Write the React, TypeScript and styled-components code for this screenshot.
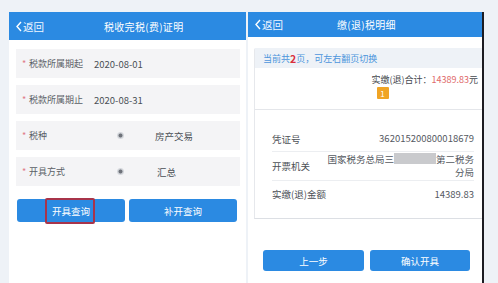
import styled, { createGlobalStyle } from 'styled-components';

const GlobalStyle = createGlobalStyle`
  html, body {
    margin: 0;
    padding: 0;
    background: #eef2f7;
    font-family: 'Noto Sans CJK SC', 'Noto Sans', sans-serif;
  }
`;

const Page = styled.div`
  display: flex;
  width: 498px;
  height: 283px;
  padding-top: 12px;
  box-sizing: border-box;
  overflow: hidden;
`;

const Screen = styled.div<{ $width: number; $ml: number; $edge?: boolean }>`
  display: flex;
  flex-direction: column;
  width: ${(p) => p.$width}px;
  margin-left: ${(p) => p.$ml}px;
  background: #ffffff;
  border-right: ${(p) => (p.$edge ? '2px solid #1c1c22' : 'none')};
  box-sizing: border-box;
`;

const Header = styled.div<{ $h: number }>`
  display: flex;
  align-items: center;
  height: ${(p) => p.$h}px;
  background: #2b8ae2;
  color: #ffffff;
  padding-left: 7px;
`;

const Back = styled.span`
  display: flex;
  align-items: center;
  gap: 1px;
  font-size: 10.5px;
  color: #eef6ff;
`;

const Chevron = () => (
  <svg width="6" height="11" viewBox="0 0 6 11">
    <path d="M5 1 L1 5.5 L5 10" stroke="#ffffff" strokeWidth="1.4" fill="none" />
  </svg>
);

const Title = styled.span<{ $left?: number }>`
  font-size: 10px;
  margin-left: ${(p) => (p.$left !== undefined ? `${p.$left}px` : 'auto')};
  margin-right: auto;
  letter-spacing: 0.3px;
`;

/* left form */

const FormBody = styled.div`
  display: flex;
  flex-direction: column;
  padding: 9px 6px 0 7px;
  gap: 7px;
`;

const FormRow = styled.div`
  display: flex;
  align-items: center;
  height: 29px;
  background: #f4f4f6;
  font-size: 9px;
  color: #5a5f66;
  padding-left: 6px;
`;

const Star = styled.span`
  color: #e07a86;
  width: 7px;
`;

const Label = styled.span`
  width: 65px;
`;

const Value = styled.span<{ $ml?: number }>`
  color: #4a4f55;
  font-size: 9.5px;
  margin-left: ${(p) => p.$ml ?? 0}px;
`;

const Radio = styled.span`
  width: 7px;
  height: 7px;
  border-radius: 50%;
  background: radial-gradient(circle, #6e727a 0 32%, #cfd2d7 48%, #e6e8ec 100%);
  margin-left: 23px;
  margin-right: 31px;
`;

const ButtonRow = styled.div<{ $pt: number; $gap: number; $pl: number }>`
  display: flex;
  gap: ${(p) => p.$gap}px;
  padding: ${(p) => p.$pt}px 0 0 ${(p) => p.$pl}px;
`;

const Button = styled.div<{ $w: number; $h: number }>`
  position: relative;
  display: flex;
  align-items: center;
  justify-content: center;
  width: ${(p) => p.$w}px;
  height: ${(p) => p.$h}px;
  background: #2b8ae2;
  border-radius: 3px;
  color: #ffffff;
  font-size: 9.5px;
`;

const Highlight = styled.span`
  position: absolute;
  left: 28px;
  top: -1px;
  width: 46px;
  height: 22px;
  border: 2px solid #a8344a;
  border-radius: 2px;
`;

/* right detail */

const Card = styled.div`
  display: flex;
  flex-direction: column;
  margin: 11px 0 0 6px;
  height: 170px;
  border-left: 1px solid #e6e8ec;
  border-bottom: 1px solid #dcdfe4;
  border-top-left-radius: 2px;
`;

const Notice = styled.div`
  display: flex;
  align-items: center;
  height: 20px;
  background: #eef2f7;
  padding-left: 8px;
  font-size: 9px;
  color: #4c95dc;
`;

const Red = styled.b`
  color: #d9303c;
  font-size: 10.5px;
`;

const Total = styled.div`
  display: flex;
  justify-content: flex-end;
  padding: 5px 4px 0 0;
  font-size: 9px;
  color: #44484e;
`;

const Amount = styled.span`
  color: #e06a6a;
`;

const Pager = styled.div`
  display: flex;
  justify-content: center;
  padding: 1px 0 10px 28px;
  border-bottom: 1px solid #e4e6ea;
`;

const PageBadge = styled.span`
  display: flex;
  align-items: center;
  justify-content: center;
  width: 12px;
  height: 12px;
  background: #f0a424;
  color: #ffffff;
  font-size: 8px;
  border-radius: 1px;
`;

const DetailList = styled.div`
  display: flex;
  flex-direction: column;
  padding: 16px 8px 0 17px;
`;

const DetailRow = styled.div<{ $h: number; $last?: boolean }>`
  display: flex;
  align-items: center;
  justify-content: space-between;
  min-height: ${(p) => p.$h}px;
  border-bottom: ${(p) => (p.$last ? 'none' : '1px solid #eceef1')};
  font-size: 9.5px;
  color: #4c5056;
`;

const DetailValue = styled.span`
  text-align: right;
  line-height: 13px;
  white-space: nowrap;
  color: #55595f;
`;

const Masked = styled.span`
  display: inline-block;
  width: 42px;
  height: 11px;
  background: #c9cacd;
  vertical-align: -1px;
`;

export default function App() {
  return (
    <>
      <GlobalStyle />
      <Page>
        <Screen $width={237} $ml={9}>
          <Header $h={28}>
            <Back>
              <Chevron />
              返回
            </Back>
            <Title $left={60}>税收完税(费)证明</Title>
          </Header>
          <FormBody>
            <FormRow>
              <Star>*</Star>
              <Label>税款所属期起</Label>
              <Value>2020-08-01</Value>
            </FormRow>
            <FormRow>
              <Star>*</Star>
              <Label>税款所属期止</Label>
              <Value>2020-08-31</Value>
            </FormRow>
            <FormRow>
              <Star>*</Star>
              <Label>税种</Label>
              <Radio />
              <Value>房产交易</Value>
            </FormRow>
            <FormRow>
              <Star>*</Star>
              <Label>开具方式</Label>
              <Radio />
              <Value $ml={2}>汇总</Value>
            </FormRow>
          </FormBody>
          <ButtonRow $pt={13} $gap={4} $pl={8}>
            <Button $w={108} $h={23}>
              开具查询
              <Highlight />
            </Button>
            <Button $w={108} $h={23}>
              补开查询
            </Button>
          </ButtonRow>
        </Screen>

        <Screen $width={236} $ml={2} $edge>
          <Header $h={25}>
            <Back>
              <Chevron />
              返回
            </Back>
            <Title>缴(退)税明细</Title>
            <span style={{ width: 32 }} />
          </Header>
          <Card>
            <Notice>
              当前共<Red>2</Red>页，可左右翻页切换
            </Notice>
            <Total>
              实缴(退)合计：<Amount>14389.83</Amount>元
            </Total>
            <Pager>
              <PageBadge>1</PageBadge>
            </Pager>
            <DetailList>
              <DetailRow $h={25}>
                <span>凭证号</span>
                <DetailValue>362015200800018679</DetailValue>
              </DetailRow>
              <DetailRow $h={28}>
                <span>开票机关</span>
                <DetailValue>
                  国家税务总局三<Masked />第二税务
                  <br />
                  分局
                </DetailValue>
              </DetailRow>
              <DetailRow $h={26} $last>
                <span>实缴(退)金额</span>
                <DetailValue>14389.83</DetailValue>
              </DetailRow>
            </DetailList>
          </Card>
          <ButtonRow $pt={31} $gap={6} $pl={15}>
            <Button $w={101} $h={21}>
              上一步
            </Button>
            <Button $w={100} $h={21}>
              确认开具
            </Button>
          </ButtonRow>
        </Screen>
      </Page>
    </>
  );
}
